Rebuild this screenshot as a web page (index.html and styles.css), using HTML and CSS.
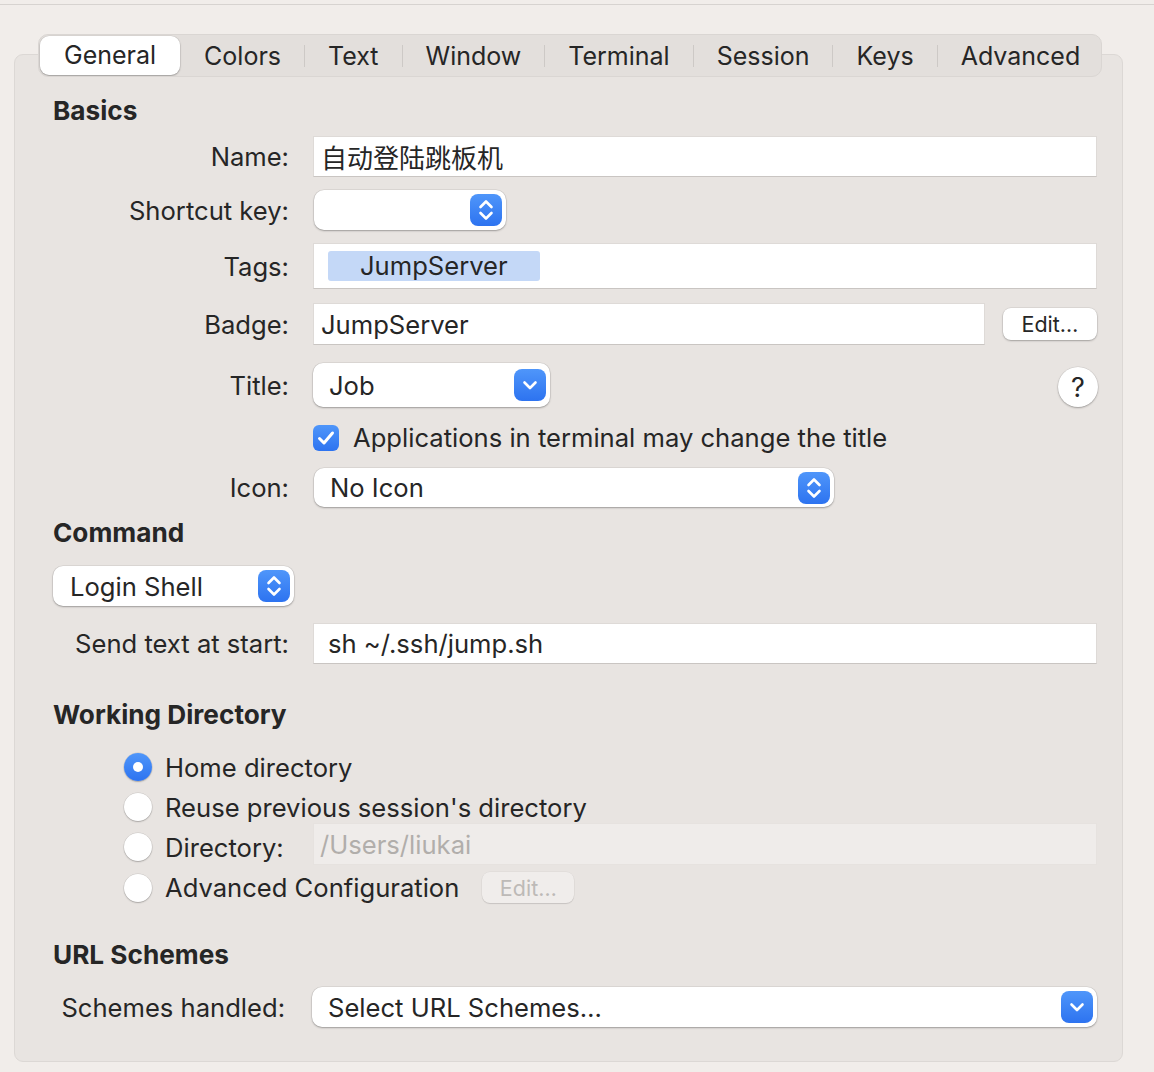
FILE: index.html
```html
<!DOCTYPE html>
<html>
<head>
<meta charset="utf-8">
<link rel="stylesheet" href="styles.css">
</head>
<body>
<div class="topbar"></div>
<div class="tabs-wrap">
  <div class="tabs">
    <div class="tab selected">General</div>
    <div class="tab first">Colors</div>
    <div class="tab">Text</div>
    <div class="tab">Window</div>
    <div class="tab">Terminal</div>
    <div class="tab">Session</div>
    <div class="tab">Keys</div>
    <div class="tab">Advanced</div>
  </div>
</div>
<div class="panel">
  <div class="heading h-basics">Basics</div>

  <div class="field-row r-name">
    <div class="lbl">Name:</div>
    <div class="textfield cjk">自动登陆跳板机</div>
  </div>

  <div class="field-row r-shortcut">
    <div class="lbl">Shortcut key:</div>
    <div class="popup w-shortcut">
      <span class="popup-text"></span>
      <span class="blue-btn"><svg viewBox="0 0 32 32" width="32" height="32"><path d="M10.5 13 L16 7.5 L21.5 13 M10.5 19 L16 24.5 L21.5 19" fill="none" stroke="#fff" stroke-width="2.6" stroke-linecap="round" stroke-linejoin="round"/></svg></span>
    </div>
  </div>

  <div class="field-row r-tags">
    <div class="lbl">Tags:</div>
    <div class="textfield tagfield"><span class="tag">JumpServer</span></div>
  </div>

  <div class="field-row r-badge">
    <div class="lbl">Badge:</div>
    <div class="badge-line">
      <div class="textfield grow">JumpServer</div>
      <div class="push-btn">Edit…</div>
    </div>
  </div>

  <div class="field-row r-title">
    <div class="lbl">Title:</div>
    <div class="title-line">
      <div class="popup w-title">
        <span class="popup-text">Job</span>
        <span class="blue-btn"><svg viewBox="0 0 32 32" width="32" height="32"><path d="M10.5 13.5 L16 19 L21.5 13.5" fill="none" stroke="#fff" stroke-width="2.6" stroke-linecap="round" stroke-linejoin="round"/></svg></span>
      </div>
      <div class="help">?</div>
    </div>
  </div>

  <div class="field-row r-check">
    <div class="lbl"></div>
    <div class="check-line">
      <span class="checkbox"><svg viewBox="0 0 26 26" width="26" height="26"><path d="M6.5 13.5 L11 18 L19.5 8" fill="none" stroke="#fff" stroke-width="3" stroke-linecap="round" stroke-linejoin="round"/></svg></span>
      <span>Applications in terminal may change the title</span>
    </div>
  </div>

  <div class="field-row r-icon">
    <div class="lbl">Icon:</div>
    <div class="popup w-icon">
      <span class="popup-text">No Icon</span>
      <span class="blue-btn"><svg viewBox="0 0 32 32" width="32" height="32"><path d="M10.5 13 L16 7.5 L21.5 13 M10.5 19 L16 24.5 L21.5 19" fill="none" stroke="#fff" stroke-width="2.6" stroke-linecap="round" stroke-linejoin="round"/></svg></span>
    </div>
  </div>

  <div class="heading h-command">Command</div>

  <div class="r-login">
    <div class="popup w-login">
      <span class="popup-text">Login Shell</span>
      <span class="blue-btn"><svg viewBox="0 0 32 32" width="32" height="32"><path d="M10.5 13 L16 7.5 L21.5 13 M10.5 19 L16 24.5 L21.5 19" fill="none" stroke="#fff" stroke-width="2.6" stroke-linecap="round" stroke-linejoin="round"/></svg></span>
    </div>
  </div>

  <div class="field-row r-send">
    <div class="lbl">Send text at start:</div>
    <div class="textfield pad14">sh ~/.ssh/jump.sh</div>
  </div>

  <div class="heading h-wd">Working Directory</div>

  <div class="radio-row r-radio1">
    <span class="radio on"><span class="dot"></span></span>
    <span>Home directory</span>
  </div>
  <div class="radio-row r-radio2">
    <span class="radio"></span>
    <span>Reuse previous session's directory</span>
  </div>
  <div class="radio-row r-radio3">
    <div class="radio-group">
      <span class="radio"></span>
      <span>Directory:</span>
    </div>
    <div class="textfield disabled grow">/Users/liukai</div>
  </div>
  <div class="radio-row r-radio4">
    <span class="radio"></span>
    <span>Advanced Configuration</span>
    <span class="push-btn disabled-btn">Edit…</span>
  </div>

  <div class="heading h-url">URL Schemes</div>

  <div class="field-row r-schemes">
    <div class="lbl lbl-schemes">Schemes handled:</div>
    <div class="popup w-schemes">
      <span class="popup-text">Select URL Schemes…</span>
      <span class="blue-btn"><svg viewBox="0 0 32 32" width="32" height="32"><path d="M10.5 13.5 L16 19 L21.5 13.5" fill="none" stroke="#fff" stroke-width="2.6" stroke-linecap="round" stroke-linejoin="round"/></svg></span>
    </div>
  </div>
</div>
</body>
</html>
```
FILE: styles.css
```css
* { box-sizing: border-box; }

body {
  margin: 0;
  background: #f1edea;
  font-family: "Inter", "Noto Sans CJK SC", sans-serif;
  font-size: 25.6px;
  color: #262626;
  width: 1154px;
  height: 1072px;
  overflow: hidden;
}

.topbar {
  height: 5px;
  border-bottom: 1px solid #d7d3d0;
}

.tabs-wrap {
  margin-top: 29px;
  padding-left: 38px;
  position: relative;
  z-index: 1;
}

.tabs {
  display: flex;
  align-items: center;
  width: 1064px;
  height: 43px;
  padding: 0 1px;
  background: #e3dfdc;
  border: 1px solid #dad6d3;
  border-radius: 10px;
  font-size: 25px;
  overflow: hidden;
}

.tab {
  height: 22px;
  line-height: 22px;
  padding: 0 23px;
  border-left: 1px solid #cdc9c6;
  white-space: nowrap;
  flex: none;
}

.tab.first { border-left: none; padding: 0 23px 0 24px; }

.tab.selected {
  height: 39px;
  line-height: 39px;
  padding: 0 24px;
  border-left: none;
  background: #fff;
  border-radius: 9px;
  box-shadow: 0 0 0 0.5px rgba(0,0,0,0.08), 0 1px 2px rgba(0,0,0,0.28);
}

.panel {
  margin: -23px 0 0 14px;
  width: 1109px;
  height: 1008px;
  background: #e8e4e1;
  border: 1px solid #dcd8d5;
  border-radius: 9px;
  padding: 41px 25px 0 38px;
  display: flex;
  flex-direction: column;
}

.heading {
  height: 30px;
  line-height: 29px;
  font-weight: 700;
  font-size: 26.2px;
}

.field-row {
  display: grid;
  grid-template-columns: 236px 1fr;
  column-gap: 24px;
  align-items: center;
}

.lbl {
  text-align: right;
  white-space: nowrap;
}

.textfield {
  height: 100%;
  display: flex;
  align-items: center;
  background: #fff;
  border: 1px solid #dedad7;
  border-bottom-color: #c9c5c2;
  padding-left: 7px;
  white-space: nowrap;
}

.cjk { font-family: "Noto Sans CJK SC", sans-serif; font-size: 26px; }
.pad14 { padding-left: 14px; }
.grow { flex: 1; }

.r-name { margin-top: 10px; height: 41px; }
.r-shortcut { margin-top: 13px; height: 40px; }
.r-tags { margin-top: 13px; height: 46px; }
.r-badge { margin-top: 14px; height: 42px; }
.r-title { margin-top: 18px; height: 41px; }
.r-check { margin-top: 18px; height: 30px; }
.r-icon { margin-top: 16px; height: 39px; }
.h-command { margin-top: 11px; }
.r-login { margin-top: 18px; height: 40px; }
.r-send { margin-top: 17px; height: 41px; }
.h-wd { margin-top: 36px; }
.r-radio1 { margin-top: 22px; height: 30px; }
.r-radio2 { margin-top: 10px; height: 30px; }
.r-radio3 { margin-top: 1px; height: 42px; }
.r-radio4 { margin-top: 7px; height: 31px; }
.h-url { margin-top: 37px; }
.r-schemes { margin-top: 17px; height: 40px; }

.tagfield { padding-left: 14px; }
.tag {
  height: 30px;
  line-height: 30px;
  padding: 0 32px;
  background: #c4d8f7;
  border-radius: 3px;
}

.popup {
  height: 100%;
  display: flex;
  align-items: center;
  justify-content: space-between;
  background: #fff;
  border-radius: 10px;
  box-shadow: 0 0 0 0.5px rgba(0,0,0,0.1), 0 1px 2px rgba(0,0,0,0.28);
  padding: 0 4px 0 16px;
}

.w-shortcut { width: 192px; margin-left: 1px; }
.w-title { width: 237px; }
.w-icon { width: 520px; margin-left: 1px; }
.w-login { width: 241px; padding-left: 17px; }
.w-schemes { margin-left: -1px; }

.blue-btn {
  width: 32px;
  height: 32px;
  border-radius: 8px;
  background: linear-gradient(#4f96fa, #2d73f0);
  display: flex;
  flex: none;
}

.badge-line, .title-line {
  display: flex;
  align-items: center;
  height: 100%;
}

.push-btn {
  width: 94px;
  height: 32px;
  margin-left: 18px;
  display: flex;
  align-items: center;
  justify-content: center;
  font-size: 21.5px;
  background: #fff;
  border-radius: 8px;
  box-shadow: 0 0 0 0.5px rgba(0,0,0,0.1), 0 1px 2px rgba(0,0,0,0.26);
}

.title-line { justify-content: space-between; }

.help {
  width: 40px;
  height: 40px;
  margin-right: -1px;
  margin-top: 4px;
  border-radius: 50%;
  background: #fff;
  box-shadow: 0 0 0 0.5px rgba(0,0,0,0.1), 0 1px 2px rgba(0,0,0,0.28);
  display: flex;
  align-items: center;
  justify-content: center;
  font-size: 27px;
  font-weight: 400;
}

.check-line {
  display: flex;
  align-items: center;
  gap: 14px;
}

.checkbox {
  width: 26px;
  height: 26px;
  border-radius: 6px;
  background: linear-gradient(#4f96fa, #2d73f0);
  display: flex;
}

.r-login { display: flex; }

.radio-row {
  display: flex;
  align-items: center;
  padding-left: 71px;
}

.radio-row > span:nth-child(2), .radio-group > span:nth-child(2) { margin-left: 13px; }

.radio {
  width: 28px;
  height: 28px;
  border-radius: 50%;
  background: #fff;
  box-shadow: 0 0 0 0.5px rgba(0,0,0,0.12), 0 1px 1.5px rgba(0,0,0,0.22);
  display: flex;
  align-items: center;
  justify-content: center;
  flex: none;
}

.radio.on { background: linear-gradient(#4f96fa, #2d73f0); }
.radio .dot { width: 10px; height: 10px; border-radius: 50%; background: #fff; }

.radio-group {
  width: 189px;
  display: flex;
  align-items: center;
  margin-top: 6px;
}

.textfield.disabled {
  background: #efecea;
  border-color: #e6e2df;
  color: #b1aeab;
  padding-left: 6px;
}

.disabled-btn {
  margin-left: 23px;
  width: 92px;
  height: 31px;
  background: #f0edeb;
  color: #bdbab7;
  box-shadow: 0 0 0 0.5px rgba(0,0,0,0.05), 0 1px 1px rgba(0,0,0,0.12);
}

.lbl-schemes { padding-right: 4px; }
```
